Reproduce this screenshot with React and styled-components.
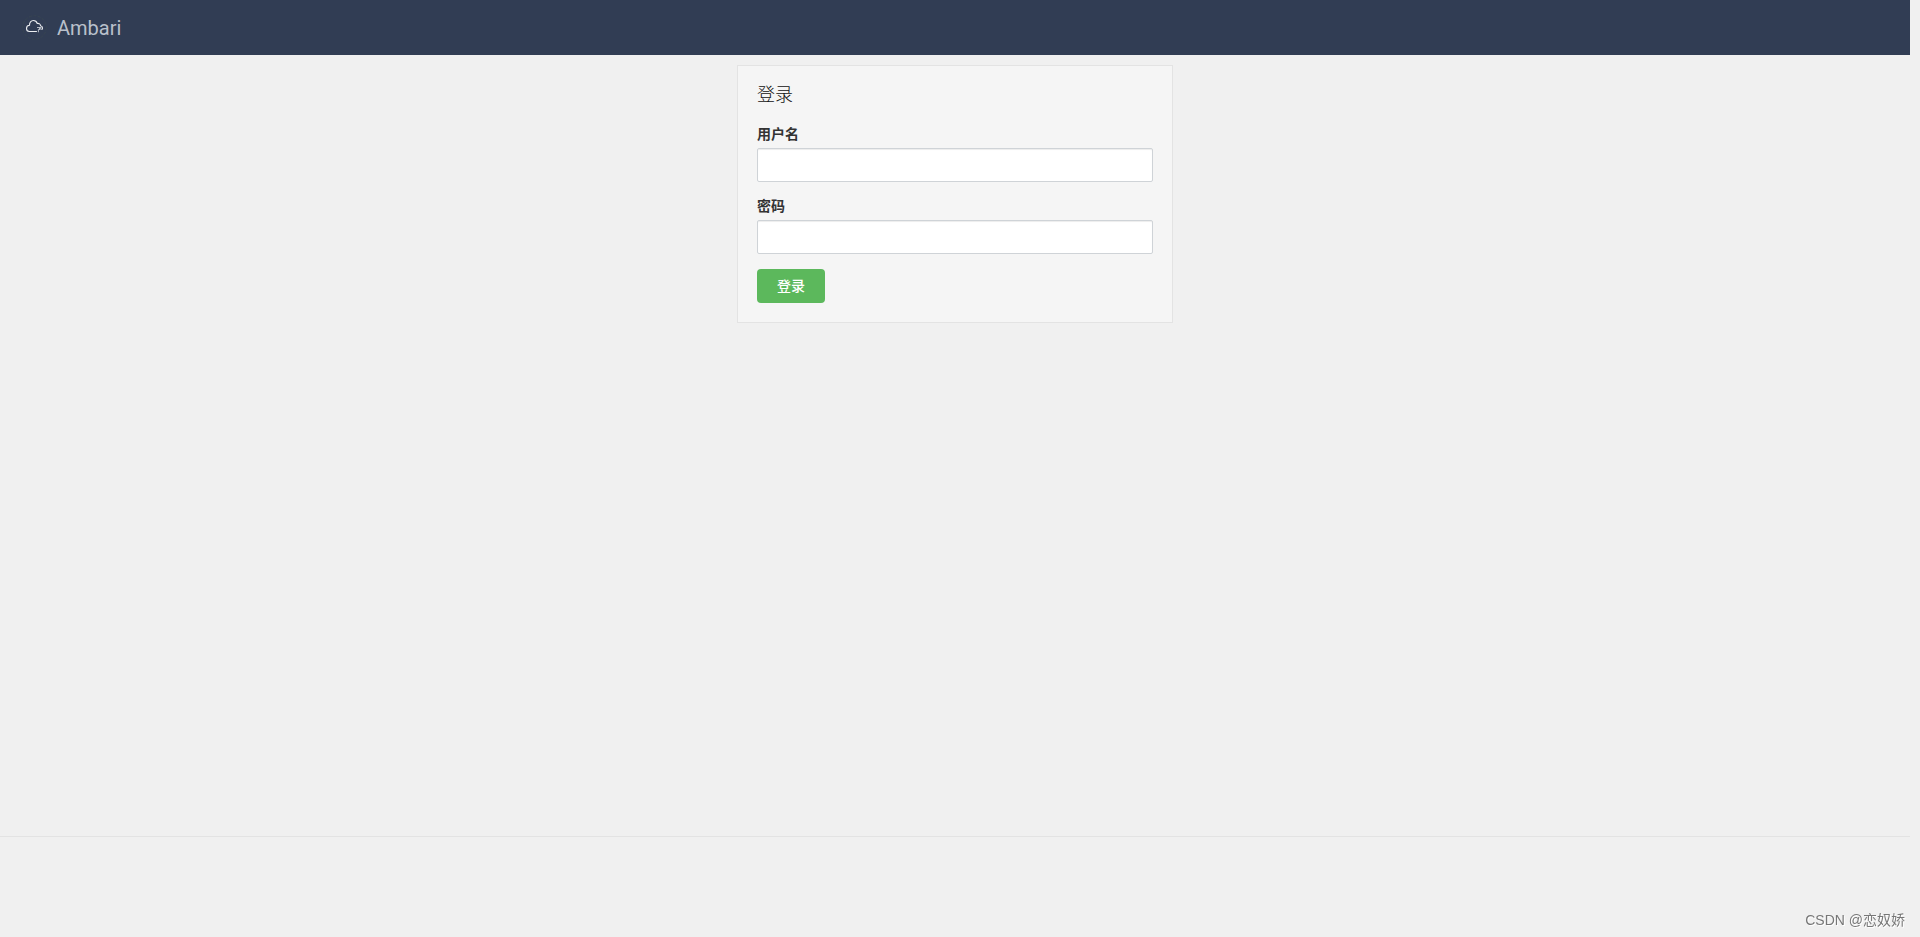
import { useState } from "react"
import styled, { createGlobalStyle } from "styled-components"

const App = () => {

  const [username, setUsername] = useState("")
  const [password, setPassword] = useState("")

  return (

    <>

      <GlobalStyle />

      <PageStyle>

        <HeaderStyle>

          <a href="#">

            <CloudLogo />

            <span>Ambari</span>

          </a>

        </HeaderStyle>

        <MainStyle>

          <LoginStyle onSubmit={e => e.preventDefault()}>

            <h1>登录</h1>

            <Field id="username" label="用户名" type="text" value={username} setValue={setUsername} />

            <Field id="password" label="密码" type="password" value={password} setValue={setPassword} />

            <ButtonStyle type="submit">登录</ButtonStyle>

          </LoginStyle>

        </MainStyle>

        <FooterStyle />

      </PageStyle>

      <WatermarkStyle>CSDN @恋奴娇</WatermarkStyle>

    </>

  )

}

const Field = ({ id, label, type, value, setValue }) => (

  <FieldStyle>

    <label htmlFor={id}>{label}</label>

    <input id={id} type={type} value={value} onChange={e => setValue(e.target.value)} />

  </FieldStyle>

)

const CloudLogo = () => (

  <svg width="25" height="25" viewBox="0 0 25 25" fill="none" aria-hidden="true">
    <circle cx="12.5" cy="12.5" r="11.8" stroke="#384650" strokeWidth="0.8" strokeDasharray="3 1.5" />
    <path
      d="M14.5 16.5H7.5C5.7 16.5 4.5 15.2 4.5 13.5C4.5 11.8 5.7 10.4 7.5 10.3C7.4 7.4 9 5.5 11.4 5.5C13.4 5.5 14.7 6.7 15.2 8.4C17.2 8.2 18.4 9.2 18.5 10.8C19.8 11 20.5 12 20.5 13.1C20.5 13.7 20.3 14.2 19.9 14.5"
      stroke="#eceef1"
      strokeWidth="1.1"
      strokeLinecap="round"
    />
    <path d="M15 12.5H19.2L18.2 14.5H16.4V17.3M17.5 12.5V14.5" stroke="#c4c9d1" strokeWidth="0.9" />
  </svg>

)

const GlobalStyle = createGlobalStyle`
  * {
    box-sizing: border-box;
  }

  body {
    margin: 0;
    background-color: #f0f0f0;
    color: #333;
    font-family: Roboto, "Noto Sans CJK SC", sans-serif;
    font-size: 14px;
  }
`

const PageStyle = styled.div`
  min-height: 100vh;
  margin-right: 10px;
  display: flex;
  flex-direction: column;
`

const HeaderStyle = styled.header`
  height: 55px;
  padding: 0 22px;
  display: flex;
  align-items: center;
  background-color: #313d54;

  a {
    display: flex;
    align-items: center;
    gap: 10px;
    color: #b9c0cb;
    font-size: 20px;
    line-height: 24px;
    text-decoration: none;
  }
`

const MainStyle = styled.main`
  flex: 1;
  padding: 10px 20px;
`

const LoginStyle = styled.form`
  max-width: 436px;
  margin: 0 auto;
  padding: 19px;
  border: 1px solid #e3e3e3;
  background-color: #f5f5f5;

  h1 {
    margin: 0 0 20px;
    color: #111;
    font-size: 18px;
    font-weight: 300;
    line-height: 20px;
  }
`

const FieldStyle = styled.div`
  margin-bottom: 15px;

  label {
    display: block;
    margin-bottom: 5px;
    font-weight: bold;
    line-height: 18px;
  }

  input {
    display: block;
    width: 100%;
    height: 34px;
    padding: 6px 12px;
    border: 1px solid #cfd3d7;
    border-radius: 2px;
    outline: 0 none;
    background-color: white;
    box-shadow: inset 0 1px 1px rgba(0, 0, 0, .075);
    font: inherit;

    &:focus {
      border-color: #66afe9;
    }
  }
`

const ButtonStyle = styled.button`
  display: block;
  height: 34px;
  padding: 0 20px;
  border: 0 none;
  border-radius: 4px;
  background-color: #5cb85c;
  color: white;
  font-family: inherit;
  font-size: 14px;
  font-weight: 500;
  line-height: 20px;
  cursor: pointer;

  &:hover {
    background-color: #449d44;
  }
`

const FooterStyle = styled.footer`
  height: 101px;
  border-top: 1px solid #e3e3e3;
`

const WatermarkStyle = styled.div`
  position: fixed;
  right: 15px;
  bottom: 7px;
  color: #777;
  font-family: "Liberation Sans", "Noto Sans CJK SC", sans-serif;
  font-size: 14px;
  line-height: 20px;
  text-shadow: 1px 1px 0 white;
`

export default App
